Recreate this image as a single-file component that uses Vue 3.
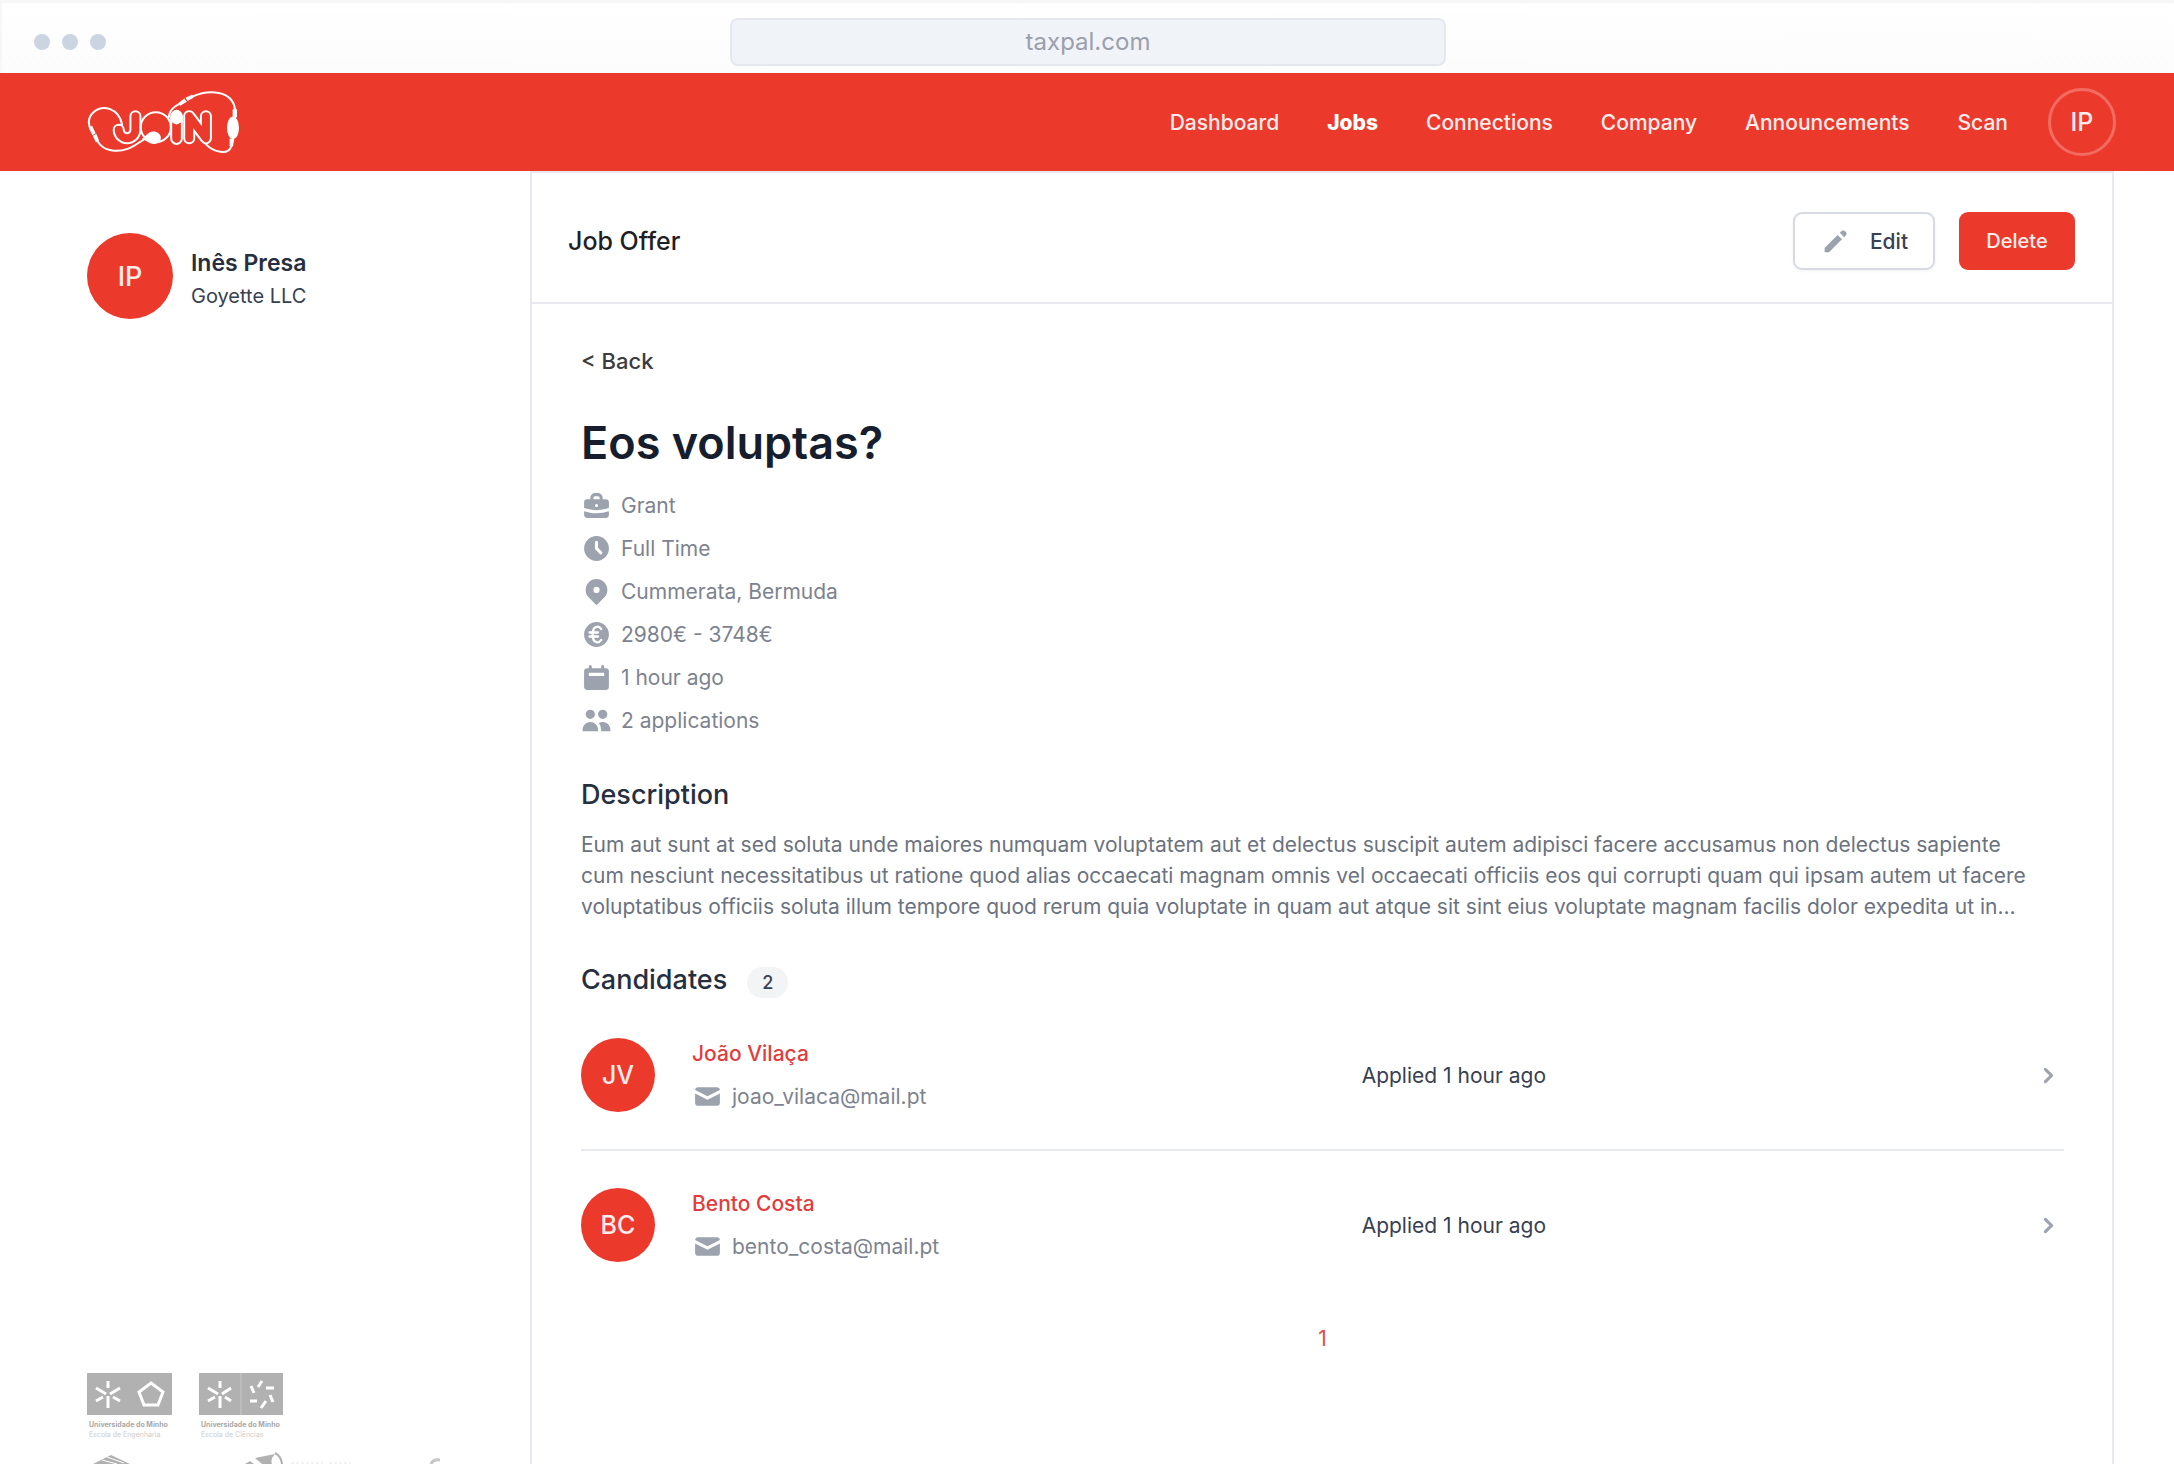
<script setup>
const nav = ['Dashboard', 'Jobs', 'Connections', 'Company', 'Announcements', 'Scan']

const facts = [
  { icon: 'briefcase', text: 'Grant' },
  { icon: 'clock', text: 'Full Time' },
  { icon: 'pin', text: 'Cummerata, Bermuda' },
  { icon: 'euro', text: '2980€ - 3748€' },
  { icon: 'calendar', text: '1 hour ago' },
  { icon: 'users', text: '2 applications' },
]

const description = [
  'Eum aut sunt at sed soluta unde maiores numquam voluptatem aut et delectus suscipit autem adipisci facere accusamus non delectus sapiente',
  'cum nesciunt necessitatibus ut ratione quod alias occaecati magnam omnis vel occaecati officiis eos qui corrupti quam qui ipsam autem ut facere',
  'voluptatibus officiis soluta illum tempore quod rerum quia voluptate in quam aut atque sit sint eius voluptate magnam facilis dolor expedita ut in…',
].join('\n')

const candidates = [
  { initials: 'JV', name: 'João Vilaça', email: 'joao_vilaca@mail.pt', applied: 'Applied 1 hour ago' },
  { initials: 'BC', name: 'Bento Costa', email: 'bento_costa@mail.pt', applied: 'Applied 1 hour ago' },
]
</script>

<template>
  <div class="window">
    <div class="chrome">
      <div class="dots"><i></i><i></i><i></i></div>
      <input class="address" type="text" value="taxpal.com" aria-label="Address" />
      <div class="dots-space"></div>
    </div>

    <header class="topbar">
      <a href="#" class="brand" aria-label="JOIN">
        <svg viewBox="48 28 464 200" width="155" height="67" fill="none" stroke="#fff" stroke-linecap="round" stroke-linejoin="round">
          <g stroke-width="6">
            <path d="M156 134C146 84 98 74 72 96C54 112 54 132 62 148" />
            <path d="M84 186C100 214 142 218 172 207C196 199 210 184 226 176" />
            <path d="M296 112C298 88 316 78 332 70" />
            <path d="M368 50C416 28 486 32 494 88" />
            <path d="M483 198C476 226 430 220 404 190" />
          </g>
          <path stroke-width="36" d="M196 109V150A25 25 0 0 1 146 150" />
          <path stroke-width="24" stroke="#eb3a2c" d="M196 109V150A25 25 0 0 1 146 150" />
          <circle cx="257" cy="142" r="45" stroke-width="6" fill="#eb3a2c" />
          <path fill="#fff" stroke="none" d="M216 176L238 158C252 150 272 158 272 174C272 190 256 196 240 190Z" />
          <path stroke-width="36" d="M357 109V175M357 109L407 175V109" />
          <path stroke-width="24" stroke="#eb3a2c" d="M357 109V175M357 109L407 175V109" />
          <rect x="303" y="94" width="32" height="98" rx="16" stroke-width="6" fill="#eb3a2c" />
          <ellipse cx="319" cy="112" rx="18" ry="22" fill="#fff" stroke="none" />
          <g fill="#fff" stroke="none">
            <path d="M56 142L66 138L77 160L67 166ZM68 168L79 162L87 182L78 188Z" />
            <path d="M324 70L342 56L350 66L330 78ZM346 54L366 44L370 54L352 64Z" />
            <rect x="487" y="86" width="13" height="28" rx="5" />
            <ellipse cx="488" cy="144" rx="18" ry="34" />
            <path d="M478 176L492 177L488 200L478 199Z" />
          </g>
        </svg>
      </a>
      <nav class="nav">
        <a v-for="item in nav" :key="item" href="#" :class="{ active: item === 'Jobs' }">{{ item }}</a>
        <button class="me" type="button">IP</button>
      </nav>
    </header>

    <div class="body">
      <aside class="sidebar">
        <div class="profile">
          <span class="avatar large">IP</span>
          <div class="identity">
            <p class="person">Inês Presa</p>
            <p class="firm">Goyette LLC</p>
          </div>
        </div>

        <div class="sponsors">
          <div class="schools">
            <figure>
              <svg viewBox="0 0 85 42" width="85" height="42" fill="none" stroke="#fff" stroke-width="3">
                <path fill="#b1b1b1" stroke="none" d="M0 0H85V42H0Z" />
                <path d="M21 8V15M21 23V35M9 15L19 21M33 15L23 21M9 28L16 24M33 28L26 24" />
                <path d="M64 10L76 19L71 32H57L52 19Z" />
              </svg>
              <figcaption><b>Universidade do Minho</b>Escola de Engenharia</figcaption>
            </figure>
            <figure>
              <svg viewBox="0 0 84 42" width="84" height="42" fill="none" stroke="#fff" stroke-width="3">
                <path fill="#b1b1b1" stroke="none" d="M0 0H84V42H0Z" />
                <path d="M42 0V42" stroke="#c8c8c8" stroke-width="1" />
                <path d="M21 8V15M21 23V35M9 15L19 21M32 15L23 21M9 28L16 24M32 28L26 24" />
                <path d="M63 8L59 14M67 15H75M52 13L55 20M71 22L74 29M51 28H58M67 28L62 35" />
              </svg>
              <figcaption><b>Universidade do Minho</b>Escola de Ciências</figcaption>
            </figure>
          </div>
          <svg class="partners" viewBox="0 0 354 12" width="354" height="12">
            <path fill="#b1b1b1" d="M6 12L24 3L43 12Z" />
            <path stroke="#fff" d="M15 8L30 12M20 5L37 11" />
            <path fill="#b1b1b1" d="M158 12L163 9L167 12ZM168 6L188 2Q183 7 185 12H175Z" />
            <path fill="none" stroke="#b1b1b1" stroke-width="2" d="M188 1Q194 4 195 12" />
            <path fill="none" stroke="#e6e6e6" d="M204 11H236M242 11H264" stroke-dasharray="3 2" />
            <path fill="none" stroke="#c6c6c6" stroke-width="3" d="M344 12Q346 7 353 8" />
          </svg>
        </div>
      </aside>

      <main class="main">
        <div class="heading">
          <h1>Job Offer</h1>
          <button class="btn outline" type="button">
            <svg viewBox="0 0 20 20" width="31" height="31" fill="currentColor"><path d="M13.586 3.586a2 2 0 112.828 2.828l-.793.793-2.828-2.828.793-.793zM11.379 5.793L3 14.172V17h2.828l8.38-8.379-2.83-2.828z" /></svg>
            Edit
          </button>
          <button class="btn solid" type="button">Delete</button>
        </div>

        <article class="offer">
          <a href="#" class="back">&lt; Back</a>
          <h2 class="title">Eos voluptas?</h2>
          <ul class="facts">
            <li v-for="fact in facts" :key="fact.icon">
              <svg viewBox="0 0 20 20" width="31" height="31" fill="currentColor" fill-rule="evenodd" clip-rule="evenodd">
                <template v-if="fact.icon === 'briefcase'">
                  <path d="M6 6V5a3 3 0 013-3h2a3 3 0 013 3v1h2a2 2 0 012 2v3.571A22.952 22.952 0 0110 13a22.95 22.95 0 01-8-1.429V8a2 2 0 012-2h2zm2-1a1 1 0 011-1h2a1 1 0 011 1v1H8V5zm1 5a1 1 0 011-1h.01a1 1 0 110 2H10a1 1 0 01-1-1z" />
                  <path d="M2 13.692V16a2 2 0 002 2h12a2 2 0 002-2v-2.308A24.974 24.974 0 0110 15c-2.796 0-5.487-.46-8-1.308z" />
                </template>
                <path v-else-if="fact.icon === 'clock'" d="M10 18a8 8 0 100-16 8 8 0 000 16zm1-12a1 1 0 10-2 0v4a1 1 0 00.293.707l2.828 2.829a1 1 0 101.415-1.415L11 9.586V6z" />
                <path v-else-if="fact.icon === 'pin'" d="M5.05 4.05a7 7 0 119.9 9.9L10 18.9l-4.95-4.95a7 7 0 010-9.9zM10 11a2 2 0 100-4 2 2 0 000 4z" />
                <template v-else-if="fact.icon === 'euro'">
                  <circle cx="10" cy="10" r="8" />
                  <path d="M13 6.4C12.200 5.200 11.200 4.800 10.200 5C6.600 5.600 6.600 14.400 10.200 15C11.200 15.200 12.200 14.800 13 13.600M5.500 8.700H11M5.500 11.300H11" fill="none" stroke="#fff" stroke-width="1.500" stroke-linecap="round" />
                </template>
                <path v-else-if="fact.icon === 'calendar'" d="M6 2a1 1 0 00-1 1v1H4a2 2 0 00-2 2v10a2 2 0 002 2h12a2 2 0 002-2V6a2 2 0 00-2-2h-1V3a1 1 0 10-2 0v1H7V3a1 1 0 00-1-1zm-.5 5h9a.5.5 0 01.5.5v1a.5.5 0 01-.5.5h-9a.5.5 0 01-.5-.5v-1a.5.5 0 01.5-.5z" />
                <path v-else d="M9 6a3 3 0 11-6 0 3 3 0 016 0zM17 6a3 3 0 11-6 0 3 3 0 016 0zM12.930 17c.046-.327.070-.660.070-1a6.970 6.970 0 00-1.500-4.330A5 5 0 0119 16v1h-6.070zM6 11a5 5 0 015 5v1H1v-1a5 5 0 015-5z" />
              </svg>
              {{ fact.text }}
            </li>
          </ul>

          <h3>Description</h3>
          <p class="description">{{ description }}</p>

          <div class="candidates-head">
            <h3>Candidates</h3>
            <span class="count">2</span>
          </div>
          <ul class="candidates">
            <li v-for="person in candidates" :key="person.email">
              <a href="#" class="candidate">
                <span class="avatar">{{ person.initials }}</span>
                <span class="who">
                  <span class="name">{{ person.name }}</span>
                  <span class="email">
                    <svg viewBox="0 0 20 20" width="31" height="31" fill="currentColor"><path d="M2.003 5.884L10 9.882l7.997-3.998A2 2 0 0016 4H4a2 2 0 00-1.997 1.884z" /><path d="M18 8.118l-8 4-8-4V14a2 2 0 002 2h12a2 2 0 002-2V8.118z" /></svg>
                    {{ person.email }}
                  </span>
                </span>
                <span class="applied">{{ person.applied }}</span>
                <svg class="chevron" viewBox="0 0 20 20" width="31" height="31" fill="currentColor"><path fill-rule="evenodd" d="M7.293 14.707a1 1 0 010-1.414L10.586 10 7.293 6.707a1 1 0 011.414-1.414l4 4a1 1 0 010 1.414l-4 4a1 1 0 01-1.414 0z" /></svg>
              </a>
            </li>
          </ul>
          <nav class="pages" aria-label="Pagination"><a href="#">1</a></nav>
        </article>
      </main>
    </div>
  </div>
</template>

<style>
body {
  background: #fff;
}
</style>

<style scoped>
.window {
  display: flex;
  flex-direction: column;
  height: 100vh;
  overflow: hidden;
  font-family: Inter, "Liberation Sans", sans-serif;
  font-size: 21px;
  line-height: 31px;
  color: #374151;
  --red: #eb3a2c;
  --line: #e8e9ee;
  --muted: #9ca3af;
}
* {
  box-sizing: border-box;
}
h1, h2, h3, p, ul, figure {
  margin: 0;
  padding: 0;
}
ul {
  list-style: none;
}
a {
  color: inherit;
  text-decoration: none;
}
svg {
  display: block;
  flex: none;
}
button, input {
  font: inherit;
}

.chrome {
  flex: none;
  display: flex;
  align-items: center;
  justify-content: space-between;
  height: 73px;
  padding: 11px 32px 4px;
  border-top: 3px solid #f7f7f7;
  border-left: 2px solid #f7f7f7;
  background: linear-gradient(#fff, #fcfcfd);
}
.dots, .dots-space {
  display: flex;
  gap: 12px;
  width: 72px;
}
.dots i {
  width: 16px;
  height: 16px;
  border-radius: 50%;
  background: #cbd5e1;
}
.address {
  width: 34%;
  height: 48px;
  border: 2px solid #e5e9ee;
  border-radius: 8px;
  background: #f0f3f8;
  color: #9a9fab;
  font-size: 24px;
  text-align: center;
}

.topbar {
  flex: none;
  display: flex;
  align-items: center;
  justify-content: space-between;
  height: 98px;
  padding: 0 58px 0 86px;
  background: var(--red);
  color: #fdeceb;
}
.nav {
  display: flex;
  align-items: center;
  gap: 48px;
  font-weight: 500;
}
.nav .active {
  color: #fff;
  font-weight: 800;
}
.me {
  width: 68px;
  height: 68px;
  margin-left: -8px;
  padding: 0;
  border: 3px solid #f26c62;
  border-radius: 50%;
  background: var(--red);
  color: #fdeceb;
  font-size: 25px;
  font-weight: 500;
}

.body {
  flex: 1;
  display: flex;
  min-height: 0;
  padding-right: 60px;
}
.sidebar {
  flex: none;
  display: flex;
  flex-direction: column;
  justify-content: space-between;
  width: 530px;
  padding: 62px 0 0 87px;
}
.profile {
  display: flex;
  align-items: center;
  gap: 18px;
}
.identity {
  padding-top: 8px;
}
.profile p {
  line-height: 33px;
}
.person {
  color: #252f3f;
  font-size: 23px;
  font-weight: 600;
}
.firm {
  font-size: 20px;
}
.avatar {
  flex: none;
  display: flex;
  align-items: center;
  justify-content: center;
  width: 74px;
  height: 74px;
  border-radius: 50%;
  background: var(--red);
  color: #fdeceb;
  font-size: 25px;
  font-weight: 500;
}
.avatar.large {
  width: 86px;
  height: 86px;
  font-size: 27px;
}
.schools {
  display: flex;
  gap: 27px;
  margin-bottom: 12px;
}
figcaption {
  padding: 5px 2px 0;
  color: #cdcdcd;
  font-size: 7px;
  line-height: 10px;
  white-space: nowrap;
}
figcaption b {
  display: block;
  color: #a8a8a8;
}

.main {
  flex: 1;
  min-width: 0;
  border: 2px solid var(--line);
  border-bottom: 0;
}
.heading {
  display: flex;
  align-items: center;
  gap: 24px;
  height: 131px;
  padding: 7px 37px 0 36px;
  border-bottom: 2px solid var(--line);
}
.heading h1 {
  flex: 1;
  color: #1f1f24;
  font-size: 25px;
  font-weight: 500;
}
.btn {
  display: flex;
  align-items: center;
  justify-content: center;
  height: 58px;
  border-radius: 9px;
  font-weight: 500;
}
.outline {
  gap: 19px;
  width: 142px;
  padding: 0;
  border: 2px solid #d8dae2;
  background: #fff;
  box-shadow: 0 1px 3px rgb(0 0 0 / 6%);
  color: #374151;
}
.outline svg {
  color: var(--muted);
}
.solid {
  width: 116px;
  padding: 0;
  border: 0;
  background: var(--red);
  color: #fdeceb;
  font-size: 20px;
}

.offer {
  padding: 42px 48px 0 49px;
}
.back {
  display: block;
  color: #3c3c40;
  font-size: 22px;
  font-weight: 500;
}
.title {
  margin-top: 38px;
  color: #161e2e;
  font-size: 45px;
  font-weight: 600;
  line-height: 56px;
}
.facts {
  display: flex;
  flex-direction: column;
  gap: 12px;
  margin-top: 19px;
  color: #7d8390;
}
.facts li, .email {
  display: flex;
  align-items: center;
  gap: 9px;
}
.facts svg, .email svg, .chevron {
  color: var(--muted);
}
h3 {
  color: #252f3f;
  font-size: 27px;
  font-weight: 500;
  line-height: 38px;
}
.facts + h3 {
  margin-top: 40px;
}
.description {
  margin-top: 15px;
  color: #6b7280;
  white-space: pre-line;
}
.candidates-head {
  display: flex;
  align-items: center;
  gap: 20px;
  margin-top: 39px;
}
.count {
  margin-top: 4px;
  padding: 0 15px;
  border-radius: 16px;
  background: #f3f4f6;
  font-size: 18px;
  font-weight: 500;
}
.candidates {
  margin-top: 2px;
}
.candidate {
  display: grid;
  grid-template-columns: 74px 20fr 19fr 31px;
  align-items: center;
  padding: 37px 0;
}
.candidates li + li {
  border-top: 2px solid var(--line);
}
.who {
  padding-left: 37px;
}
.name {
  display: block;
  color: #e23c3c;
  font-weight: 500;
}
.email {
  margin-top: 12px;
  color: #7d8390;
}
.pages {
  margin-top: 24px;
  color: #e84a3f;
  text-align: center;
}
</style>
